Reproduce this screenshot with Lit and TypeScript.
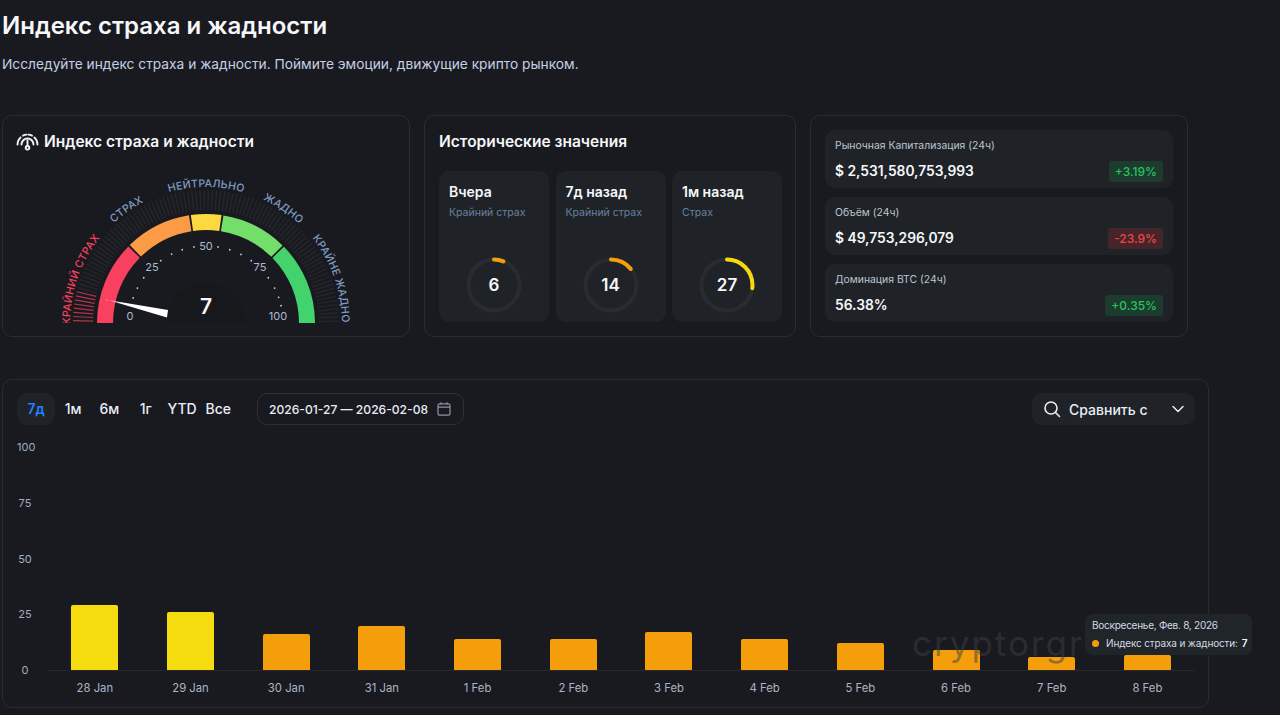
import { LitElement, html, css, svg } from "lit";
import { customElement } from "lit/decorators.js";

const CX = 170, CY = 155;
const pt = (deg: number, r: number) => {
  const a = (deg * Math.PI) / 180;
  return [CX - r * Math.cos(a), CY - r * Math.sin(a)];
};
const f = (n: number) => n.toFixed(2);
const seg = (a0: number, a1: number, r0: number, r1: number) => {
  const [x0, y0] = pt(a0, r1), [x1, y1] = pt(a1, r1), [x2, y2] = pt(a1, r0), [x3, y3] = pt(a0, r0);
  return `M${f(x0)} ${f(y0)}A${r1} ${r1} 0 0 1 ${f(x1)} ${f(y1)}L${f(x2)} ${f(y2)}A${r0} ${r0} 0 0 0 ${f(x3)} ${f(y3)}Z`;
};
const TEXT_R = 136;
const textArc = (() => {
  const [x0, y0] = pt(-20, TEXT_R), [x1, y1] = pt(200, TEXT_R);
  return `M${f(x0)} ${f(y0)}A${TEXT_R} ${TEXT_R} 0 1 1 ${f(x1)} ${f(y1)}`;
})();
const labels = [
  { t: "КРАЙНИЙ СТРАХ", a: 19, c: "#f8405c" },
  { t: "СТРАХ", a: 55, c: "#7f9cc4" },
  { t: "НЕЙТРАЛЬНО", a: 90, c: "#7f9cc4" },
  { t: "ЖАДНО", a: 124, c: "#7f9cc4" },
  { t: "КРАЙНЕ ЖАДНО", a: 160.5, c: "#7f9cc4" },
];
const segments = [
  { a0: 0, a1: 44.6, c: "#f9415f" },
  { a0: 45.6, a1: 81, c: "#fb9b45" },
  { a0: 82, a1: 98.2, c: "#fdd840" },
  { a0: 99.2, a1: 134.6, c: "#74de6b" },
  { a0: 135.6, a1: 180, c: "#43d36c" },
];
const dots = [19, 27, 36, 54, 63.5, 72, 81, 99, 108, 117, 126, 144, 153, 160.5, 167];
const scale = [
  { t: "0", x: -76, y: -3 },
  { t: "25", x: -54, y: -52 },
  { t: "50", x: 0, y: -73 },
  { t: "75", x: 54, y: -52 },
  { t: "100", x: 72, y: -3 },
];
const bars = [
  { d: "28 Jan", h: 65, c: "#f5dc0f" },
  { d: "29 Jan", h: 58, c: "#f5dc0f" },
  { d: "30 Jan", h: 36 },
  { d: "31 Jan", h: 44 },
  { d: "1 Feb", h: 31 },
  { d: "2 Feb", h: 31 },
  { d: "3 Feb", h: 38 },
  { d: "4 Feb", h: 31 },
  { d: "5 Feb", h: 27 },
  { d: "6 Feb", h: 20 },
  { d: "7 Feb", h: 13 },
  { d: "8 Feb", h: 15 },
];
const history = [
  { t: "Вчера", s: "Крайний страх", v: 6, c: "#f59e0b" },
  { t: "7д назад", s: "Крайний страх", v: 14, c: "#f59e0b" },
  { t: "1м назад", s: "Страх", v: 27, c: "#f5d90a" },
];
const stats = [
  { l: "Рыночная Капитализация (24ч)", v: "$ 2,531,580,753,993", b: "+3.19%", up: true },
  { l: "Объём (24ч)", v: "$ 49,753,296,079", b: "-23.9%", up: false },
  { l: "Доминация BTC (24ч)", v: "56.38%", b: "+0.35%", up: true },
];

@customElement("app-root")
export class AppRoot extends LitElement {
  static styles = css`
    :host { display: block; min-height: 715px; background: #191a1f; color: #fff; font-family: Inter, "Noto Sans", sans-serif; padding-left: 2px; box-sizing: border-box; overflow: hidden; position: relative; }
    h1 { margin: 0; padding-top: 11px; font-size: 24px; line-height: 30px; font-weight: 600; color: #f5f7fa; }
    .sub { margin: 12px 0 0; font-size: 13.75px; line-height: 22px; color: #c3d0e4; }
    .top { display: flex; gap: 14px; margin-top: 40px; }
    .card { box-sizing: border-box; height: 222px; border: 1px solid #2a2c32; border-radius: 10px; }
    .gauge { width: 408px; }
    .hist { width: 372px; padding: 0 14px; }
    .stat { width: 378px; padding: 14px; display: flex; flex-direction: column; gap: 9px; }
    .head { display: flex; align-items: center; gap: 5px; font-size: 15.5px; font-weight: 600; line-height: 20px; color: #f5f7fa; margin-top: 16px; }
    .gauge .head { padding-left: 13px; }
    .dial { display: block; margin: 16px auto 0; }
    .hrow { display: flex; gap: 6.5px; margin-top: 19px; }
    .h { box-sizing: border-box; flex: none; width: 110px; height: 151px; border-radius: 10px; background: #1f2327; padding: 12px 10px; display: flex; flex-direction: column; }
    .h b { font-size: 14px; line-height: 18px; font-weight: 600; color: #f5f7fa; }
    .h span { font-size: 10.5px; line-height: 14px; margin-top: 5px; color: #67809f; }
    .ring { position: relative; width: 60px; height: 60px; margin: auto auto -5px; }
    .ring svg { display: block; }
    .ring em { position: absolute; inset: 0; display: flex; align-items: center; justify-content: center; font-style: normal; font-size: 17px; font-weight: 600; color: #f5f7fa; }
    .s { flex: 1; border-radius: 10px; background: #1f2327; padding: 8.5px 10px 0; }
    .s small { display: block; font-size: 10.4px; line-height: 14px; color: #bcc5d1; }
    .sr { display: flex; justify-content: space-between; align-items: center; margin-top: 8px; }
    .sr strong { font-size: 13.8px; font-weight: 600; color: #f5f7fa; }
    .badge { font-size: 12px; line-height: 21px; padding: 0 6px; border-radius: 3px; font-weight: 500; }
    .up { background: #1d3c2e; color: #22c55e; }
    .down { background: #452529; color: #ef4444; }
    .chart { position: relative; box-sizing: border-box; width: 1207px; height: 329px; margin-top: 42px; border: 1px solid #2a2c32; border-radius: 10px; padding: 13px 13px 0 14px; }
    .bar-top { display: flex; align-items: center; height: 32px; }
    .tab { font-size: 14px; font-weight: 500; height: 32px; line-height: 32px; text-align: center; color: #e8edf5; border-radius: 10px; width: 36.3px; }
    .tab.on { width: 38px; background: #1f2327; color: #2080ff; font-weight: 600; }
    .date { display: flex; align-items: center; justify-content: space-between; box-sizing: border-box; width: 207px; height: 32px; margin-left: 20.5px; padding: 0 11px 0 11px; border: 1px solid #2c2f36; border-radius: 10px; font-size: 12.1px; font-weight: 500; color: #e8edf5; white-space: nowrap; }
    .cmp { display: flex; align-items: center; box-sizing: border-box; width: 163px; height: 32px; margin-left: auto; padding: 0 10px 0 11px; background: #1f2327; border-radius: 10px; font-size: 14px; font-weight: 500; color: #e8edf5; }
    .cmp span { margin-left: 8px; flex: 1; }
    .plot { display: flex; height: 255px; margin-top: 15px; }
    .axis { width: 16px; margin-left: -14px; padding-left: 14px; height: 236px; display: flex; flex-direction: column; justify-content: space-between; font-size: 11px; line-height: 13px; color: #a0aec2; margin-top: 1px; }
    .axis span { white-space: nowrap; width: 16px; text-align: center; }
    .cols { display: flex; flex: 1; margin-left: 14px; }
    .col { width: 95.7px; display: flex; flex-direction: column; align-items: center; }
    .area { flex: none; height: 230px; width: 100%; display: flex; align-items: flex-end; justify-content: center; border-bottom: 1px solid #26282d; box-sizing: content-box; }
    .b { width: 47px; background: #f59e0b; border-radius: 2px 2px 0 0; }
    .col label { font-size: 11.3px; line-height: 14px; margin-top: 10px; color: #a9b5c7; }
    .wm { position: absolute; left: 909px; top: 241px; font-size: 35px; line-height: 44px; letter-spacing: 2px; color: rgba(60, 62, 68, 0.5); pointer-events: none; white-space: nowrap; }
    .tip { position: absolute; left: 1082px; top: 234px; box-sizing: border-box; width: 167px; height: 41px; padding: 3px 7px; border-radius: 8px; background: #20252a; font-size: 10px; line-height: 17.5px; color: #d5dae2; white-space: nowrap; letter-spacing: -0.25px; }
    .tip div { display: flex; align-items: center; letter-spacing: -0.15px; }
    .tip i { flex: none; width: 7px; height: 7px; border-radius: 50%; background: #f59e0b; margin-right: 7px; }
    .tip b { margin-left: 4px; color: #f5f7fa; font-weight: 600; }
  `;

  gaugeSvg() {
    const ticks = [];
    for (let a = 1; a < 180; a += 1.8) {
      const [x0, y0] = pt(a, 113), [x1, y1] = pt(a, 133);
      const active = a < 15;
      ticks.push(svg`<line x1=${f(x0)} y1=${f(y0)} x2=${f(x1)} y2=${f(y1)} stroke=${active ? "#f43f5e" : "#27282d"} stroke-opacity=${active ? 0.7 : 1} stroke-width="1.2"/>`);
    }
    return html`<svg class="dial" width="340" height="155" viewBox="0 0 340 155">
      <defs>
        <path id="lbl" d=${textArc}></path>
        <linearGradient id="ndl" x1="0" x2="1" y1="0" y2="0.2"><stop offset="0" stop-color="#fff" stop-opacity=".5"/><stop offset=".25" stop-color="#fff"/></linearGradient>
      </defs>
      ${ticks}
      ${segments.map((s) => svg`<path d=${seg(s.a0, s.a1, 93, 109)} fill=${s.c}></path>`)}
      ${labels.map((l) => svg`<text font-size="10.6" font-weight="500" letter-spacing=".2" fill=${l.c} text-anchor="middle"><textPath href="#lbl" startOffset=${f(((l.a + 20) * Math.PI * TEXT_R) / 180)}>${l.t}</textPath></text>`)}
      <path d=${seg(0, 180, 0, 40)} fill="#17181c"></path>
      ${dots.map((a) => { const [x, y] = pt(a, 77); return svg`<circle cx=${f(x)} cy=${f(y)} r=".9" fill="#c9d2de"></circle>`; })}
      ${scale.map((s) => svg`<text x=${CX + s.x} y=${CY + s.y} font-size="11" fill="#a9bbd6" text-anchor="middle">${s.t}</text>`)}
      <polygon points="72,132 132,142 131,149.5" fill="url(#ndl)"></polygon>
      <circle cx="71" cy="132" r=".8" fill="#d8c98a"></circle>
      <text x=${CX} y=${CY - 9} font-size="21" font-weight="600" fill="#f5f7fa" text-anchor="middle">7</text>
    </svg>`;
  }

  ring(v: number, c: string) {
    const r = 25.5, len = 2 * Math.PI * r;
    return html`<div class="ring"><svg width="60" height="60" viewBox="0 0 60 60">
      <circle cx="30" cy="30" r=${r} fill="none" stroke="#282c32" stroke-width="4"></circle>
      <circle cx="30" cy="30" r=${r} fill="none" stroke=${c} stroke-width="4" stroke-linecap="round"
        stroke-dasharray="${f((len * v) / 100)} ${f(len)}" transform="rotate(-90 30 30)"></circle>
    </svg><em>${v}</em></div>`;
  }

  render() {
    return html`
      <h1>Индекс страха и жадности</h1>
      <p class="sub">Исследуйте индекс страха и жадности. Поймите эмоции, движущие крипто рынком.</p>
      <div class="top">
        <section class="card gauge">
          <div class="head">
            <svg width="23" height="18" viewBox="0 0 23 18" fill="none" stroke="#f0f2f5" stroke-width="1.9" stroke-linecap="round">
              <path d="M1.5 11.5A10 10 0 0 1 4.6 4.4M7 2.6A10 10 0 0 1 10.5 1.6M12.5 1.6A10 10 0 0 1 16 2.6M18.4 4.4A10 10 0 0 1 21.5 11.5"></path>
              <path d="M5.5 11.5A6 6 0 0 1 17.5 11.5"></path>
              <path d="M11.5 7.5V12.5"></path>
              <circle cx="11.5" cy="14.8" r="1.8"></circle>
            </svg>
            Индекс страха и жадности
          </div>
          ${this.gaugeSvg()}
        </section>
        <section class="card hist">
          <div class="head">Исторические значения</div>
          <div class="hrow">
            ${history.map((h) => html`<div class="h"><b>${h.t}</b><span>${h.s}</span>${this.ring(h.v, h.c)}</div>`)}
          </div>
        </section>
        <section class="card stat">
          ${stats.map((s) => html`<div class="s"><small>${s.l}</small><div class="sr"><strong>${s.v}</strong><span class="badge ${s.up ? "up" : "down"}">${s.b}</span></div></div>`)}
        </section>
      </div>
      <section class="chart">
        <div class="bar-top">
          <div class="tab on">7д</div>
          <div class="tab">1м</div><div class="tab">6м</div><div class="tab">1г</div><div class="tab">YTD</div><div class="tab">Все</div>
          <div class="date">2026-01-27 — 2026-02-08
            <svg width="16" height="16" viewBox="0 0 16 16" fill="none" stroke="#8b95a5" stroke-width="1.2"><rect x="2" y="2.8" width="12" height="11.4" rx="1.6"></rect><path d="M2 6.2H14M5 1.2V3.6M11 1.2V3.6"></path></svg>
          </div>
          <div class="cmp">
            <svg width="18" height="18" viewBox="0 0 18 18" fill="none" stroke="#e8edf5" stroke-width="1.6" stroke-linecap="round"><circle cx="8" cy="8" r="6"></circle><path d="M12.5 12.5L16.5 16.5"></path></svg>
            <span>Сравнить с</span>
            <svg width="14" height="14" viewBox="0 0 14 14" fill="none" stroke="#e8edf5" stroke-width="1.5" stroke-linecap="round" stroke-linejoin="round"><path d="M2 4.5L7 9.5L12 4.5"></path></svg>
          </div>
        </div>
        <div class="plot">
          <div class="axis"><span>100</span><span>75</span><span>50</span><span>25</span><span>0</span></div>
          <div class="cols">
            ${bars.map((b) => html`<div class="col"><div class="area"><div class="b" style="height:${b.h}px;${b.c ? `background:${b.c}` : ""}"></div></div><label>${b.d}</label></div>`)}
          </div>
        </div>
        <div class="wm">cryptorgr</div>
        <div class="tip">
          Воскресенье, Фев. 8, 2026
          <div><i></i>Индекс страха и жадности:<b>7</b></div>
        </div>
      </section>
    `;
  }
}
